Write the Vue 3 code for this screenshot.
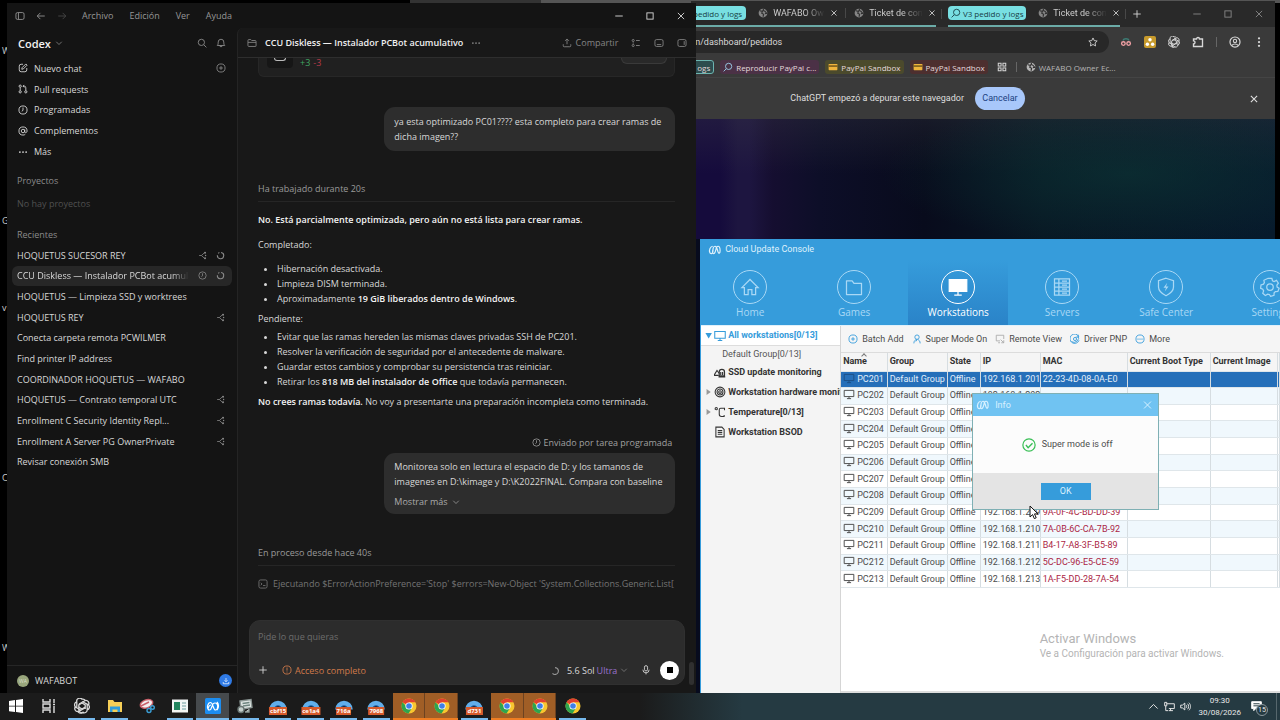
<template>
  <div class="desktop">
    <div class="top-edge"></div>
    <div class="shortcuts">
      <span v-for="(label, i) in shortcuts" :key="i">{{ label }}</span>
    </div>

    <!-- Browser window -->
    <section class="browser">
      <div class="tab-strip">
        <div class="tab-group">
          <button class="group-chip" type="button">pedido y logs</button>
          <div class="tab">
            <AppIcon name="globe" class="fav" />
            <span class="tab-title">WAFABO Ow</span>
            <button type="button" aria-label="Cerrar pestaña"><AppIcon name="close" /></button>
          </div>
          <i class="tab-divider"></i>
          <div class="tab">
            <AppIcon name="globe" class="fav" />
            <span class="tab-title">Ticket de con</span>
            <button type="button" aria-label="Cerrar pestaña"><AppIcon name="close" /></button>
          </div>
        </div>
        <i class="tab-divider"></i>
        <div class="tab-group second">
          <button class="group-chip" type="button">
            <AppIcon name="search" class="flip" />V3 pedido y logs
          </button>
          <div class="tab">
            <AppIcon name="globe" class="fav" />
            <span class="tab-title">Ticket de con</span>
            <button type="button" aria-label="Cerrar pestaña"><AppIcon name="close" /></button>
          </div>
        </div>
        <i class="tab-divider"></i>
        <button class="new-tab" type="button" aria-label="Nueva pestaña"><AppIcon name="plus" /></button>
        <div class="win-buttons dim">
          <button type="button" aria-label="Minimizar"><AppIcon name="minimize" /></button>
          <button type="button" aria-label="Maximizar"><AppIcon name="maximize" /></button>
          <button type="button" aria-label="Cerrar"><AppIcon name="closeThin" /></button>
        </div>
      </div>

      <div class="address-row">
        <div class="address">
          <input type="text" value="n/dashboard/pedidos" aria-label="Dirección" />
          <AppIcon name="star" />
        </div>
        <div class="extensions">
          <AppIcon name="incognito" class="ext-red" />
          <span class="ext-yellow"><AppIcon name="dots3" /></span>
          <AppIcon name="openai" />
          <AppIcon name="puzzle" />
          <i class="divider"></i>
          <AppIcon name="profile" />
          <AppIcon name="kebab" />
        </div>
      </div>

      <div class="bookmarks">
        <a href="#" class="mark teal">ogs</a>
        <a href="#" class="mark purple"><AppIcon name="search" class="flip" />Reproducir PayPal c...</a>
        <a href="#" class="mark olive"><AppIcon name="card" />PayPal Sandbox</a>
        <a href="#" class="mark red"><AppIcon name="card" />PayPal Sandbox</a>
        <AppIcon name="grid" class="all-marks" />
        <i class="divider"></i>
        <a href="#" class="mark plain"><AppIcon name="globe" />WAFABO Owner Ec...</a>
      </div>

      <div class="infobar">
        <span>ChatGPT empezó a depurar este navegador</span>
        <button class="cancel" type="button">Cancelar</button>
        <button class="info-close" type="button" aria-label="Cerrar aviso"><AppIcon name="close" /></button>
      </div>
      <div class="page"></div>
    </section>

    <!-- Codex window -->
    <section class="codex">
      <header class="menubar">
        <AppIcon name="panel" />
        <AppIcon name="arrowLeft" />
        <AppIcon name="arrowRight" class="faded" />
        <nav>
          <button v-for="item in menus" :key="item" type="button">{{ item }}</button>
        </nav>
        <div class="win-buttons">
          <button type="button" aria-label="Minimizar"><AppIcon name="minimize" /></button>
          <button type="button" aria-label="Maximizar"><AppIcon name="maximize" /></button>
          <button type="button" aria-label="Cerrar"><AppIcon name="closeThin" /></button>
        </div>
      </header>

      <div class="codex-body">
        <aside class="sidebar">
          <div class="brand">
            <button type="button" class="brand-name">Codex <AppIcon name="chevronDown" /></button>
            <AppIcon name="search" />
            <AppIcon name="bell" />
          </div>
          <nav class="side-nav">
            <a v-for="item in sideNav" :key="item.label" href="#">
              <AppIcon :name="item.icon" />
              <span>{{ item.label }}</span>
              <AppIcon v-if="item.action" :name="item.action" class="trail" />
            </a>
          </nav>
          <h2 class="projects-title">Proyectos</h2>
          <p class="empty">No hay proyectos</p>
          <h2 class="recents-title">Recientes</h2>
          <nav class="recents">
            <a v-for="chat in recents" :key="chat.title" href="#" :class="{ active: chat.active }">
              <span>{{ chat.title }}</span>
              <AppIcon v-for="icon in chat.icons" :key="icon" :name="icon" />
            </a>
          </nav>
          <footer class="account">
            <span class="avatar">WA</span>
            <span>WAFABOT</span>
            <button type="button" aria-label="Descargar"><AppIcon name="download" /></button>
          </footer>
        </aside>

        <main class="chat">
          <header class="chat-head">
            <AppIcon name="folderOpen" />
            <h1>CCU Diskless — Instalador PCBot acumulativo</h1>
            <AppIcon name="more" />
            <button type="button" class="share"><AppIcon name="upload" />Compartir</button>
            <AppIcon name="list" />
            <AppIcon name="bottomPanel" />
            <AppIcon name="rightPanel" />
          </header>

          <div class="thread">
            <div class="diff-card">
              <span class="diff-icon"></span>
              <span class="added">+3</span><span class="removed">-3</span>
              <span class="diff-button"></span>
            </div>
            <div class="bubble first-bubble">
              ya esta optimizado PC01???? esta completo para crear ramas de dicha imagen??
            </div>
            <p class="status worked">Ha trabajado durante 20s</p>
            <p class="verdict"><b>No. Está parcialmente optimizada, pero aún no está lista para crear ramas.</b></p>
            <p class="done-title">Completado:</p>
            <ul class="done">
              <li>Hibernación desactivada.</li>
              <li>Limpieza DISM terminada.</li>
              <li>Aproximadamente <b>19 GiB liberados dentro de Windows</b>.</li>
            </ul>
            <p class="pending-title">Pendiente:</p>
            <ul class="pending">
              <li>Evitar que las ramas hereden las mismas claves privadas SSH de PC201.</li>
              <li>Resolver la verificación de seguridad por el antecedente de malware.</li>
              <li>Guardar estos cambios y comprobar su persistencia tras reiniciar.</li>
              <li>Retirar los <b>818 MB del instalador de Office</b> que todavía permanecen.</li>
            </ul>
            <p class="advice"><b>No crees ramas todavía.</b> No voy a presentarte una preparación incompleta como terminada.</p>
            <p class="sent"><AppIcon name="clock" />Enviado por tarea programada</p>
            <div class="bubble">
              Monitorea solo en lectura el espacio de D: y los tamanos de imagenes en D:\kimage y D:\K2022FINAL. Compara con baseline
              <button type="button" class="show-more">Mostrar más <AppIcon name="chevronDown" /></button>
            </div>
            <p class="status running">En proceso desde hace 40s</p>
            <p class="command">
              <AppIcon name="terminal" />
              <span>Ejecutando $ErrorActionPreference='Stop' $errors=New-Object 'System.Collections.Generic.List[</span>
            </p>
          </div>

          <form class="composer" @submit.prevent>
            <input v-model="prompt" type="text" placeholder="Pide lo que quieras" aria-label="Mensaje" />
            <div class="composer-row">
              <button type="button" aria-label="Adjuntar"><AppIcon name="plus" /></button>
              <button type="button" class="access"><AppIcon name="alert" />Acceso completo</button>
              <AppIcon name="spinner" class="thinking" />
              <button type="button" class="model">5.6 Sol <em>Ultra</em><AppIcon name="chevronDown" /></button>
              <button type="button" aria-label="Dictar" class="mic"><AppIcon name="mic" /></button>
              <button type="button" aria-label="Detener" class="stop"></button>
            </div>
          </form>
          <span class="scroll-thumb"></span>
        </main>
      </div>
    </section>

    <!-- Cloud Update Console window -->
    <section class="console">
      <header class="console-title"><AppIcon name="cloudLogo" />Cloud Update Console</header>
      <nav class="console-nav">
        <a v-for="item in consoleNav" :key="item.label" href="#" :class="{ active: item.active }">
          <span class="ring"><AppIcon :name="item.icon" /></span>
          {{ item.label }}
        </a>
      </nav>

      <div class="console-body">
        <aside class="tree">
          <a v-for="node in tree" :key="node.label" href="#" :class="node.kind">
            <i class="caret" :class="node.caret"></i>
            <AppIcon v-if="node.icon" :name="node.icon" />
            <span>{{ node.label }}</span>
          </a>
        </aside>

        <div class="console-main">
          <div class="tools">
            <button v-for="tool in tools" :key="tool.label" type="button">
              <AppIcon :name="tool.icon" :class="{ gray: tool.gray }" />{{ tool.label }}
            </button>
          </div>
          <table>
            <colgroup>
              <col v-for="col in columns" :key="col.key" :class="'col-' + col.key" />
            </colgroup>
            <thead>
              <tr>
                <th v-for="col in columns" :key="col.key" :class="{ sorted: col.key === 'name' }">{{ col.label }}</th>
              </tr>
            </thead>
            <tbody>
              <tr v-for="pc in machines" :key="pc.name" :class="{ selected: pc.name === 'PC201' }">
                <td class="name"><AppIcon name="monitor" />{{ pc.name }}</td>
                <td>Default Group</td>
                <td>Offline</td>
                <td>{{ pc.ip }}</td>
                <td class="mac">{{ pc.mac }}</td>
                <td></td>
                <td></td>
                <td></td>
              </tr>
            </tbody>
          </table>
          <div class="hscroll"></div>
        </div>
      </div>

      <div class="dialog" role="dialog" aria-label="Info">
        <header>
          <AppIcon name="cloudLogo" /><span>Info</span>
          <button type="button" aria-label="Cerrar"><AppIcon name="closeThin" /></button>
        </header>
        <p><AppIcon name="check" />Super mode is off</p>
        <footer><button type="button">OK</button></footer>
      </div>
      <svg class="cursor" viewBox="0 0 10 15">
        <path d="M1 1v11l2.600-2.400 1.700 4 1.900-.8-1.700-3.900H9z" fill="#fff" stroke="#111" />
      </svg>
      <div class="watermark">
        <strong>Activar Windows</strong>
        <span>Ve a Configuración para activar Windows.</span>
      </div>
    </section>

    <!-- Taskbar -->
    <footer class="taskbar">
      <div class="apps">
        <button
          v-for="(app, i) in apps"
          :key="i"
          type="button"
          :aria-label="app.icon"
          :class="[app.state, { open: app.open, tagged: app.tag }]"
        >
          <AppIcon :name="app.icon" />
          <span v-if="app.tag" class="tag">{{ app.tag }}</span>
        </button>
      </div>
      <div class="tray">
        <AppIcon name="chevronUp" />
        <AppIcon name="network" />
        <AppIcon name="volume" />
        <time>09:30<br />30/08/2026</time>
        <span class="notices"><AppIcon name="notice" /><b>15</b></span>
      </div>
    </footer>
  </div>
</template>

<script setup>
import { h, ref } from "vue";

const prompt = ref("");

const icons = {
  panel: '<rect x="1.500" y="2.500" width="13" height="11" rx="2.500"/><path d="M5.500 3v10"/>',
  arrowLeft: '<path d="M14 8H2M7 3L2 8l5 5"/>',
  arrowRight: '<path d="M2 8h12M9 3l5 5-5 5"/>',
  minimize: '<path d="M2 8h12"/>',
  maximize: '<rect x="3" y="3" width="10" height="10"/>',
  close: '<path d="M3 3l10 10M13 3L3 13" stroke-width="1.800"/>',
  closeThin: '<path d="M3 3l10 10M13 3L3 13"/>',
  chevronDown: '<path d="M2.500 5.500L8 11l5.500-5.500"/>',
  chevronUp: '<path d="M2 11l6-6 6 6"/>',
  search: '<circle cx="7" cy="7" r="5"/><path d="M11 11l4 4"/>',
  bell: '<path d="M2 12c1.500-1.500 1.500-3 1.500-5.500a4.500 4.500 0 019 0c0 2.500 0 4 1.500 5.500zM6 12a2 2 0 004 0"/>',
  compose: '<path d="M8 2H5a3 3 0 00-3 3v6a3 3 0 003 3h6a3 3 0 003-3V8M6 10l.5-2.500L12.500 1.500l2 2L8.500 9.500z"/>',
  plusCircle: '<circle cx="8" cy="8" r="6.500"/><path d="M8 5v6M5 8h6"/>',
  pull: '<circle cx="3.500" cy="3.500" r="1.800"/><circle cx="3.500" cy="12.500" r="1.800"/><circle cx="12.500" cy="12.500" r="1.800"/><path d="M3.500 5.500v5M12.500 10.500V6a2.500 2.500 0 00-2.500-2.500H8M10 1.500l-2 2 2 2"/>',
  clock: '<circle cx="8" cy="8" r="6.500"/><path d="M8 4v4.500L6 10"/>',
  at: '<circle cx="8" cy="8" r="2.800"/><path d="M10.800 5.500V9c0 2.500 3.700 2.200 3.700-1A6.500 6.500 0 108 14.500c1.500 0 2.500-.4 3.500-1"/>',
  more: '<g fill="currentColor" stroke="none"><circle cx="3" cy="8" r="1.400"/><circle cx="8" cy="8" r="1.400"/><circle cx="13" cy="8" r="1.400"/></g>',
  branch: '<path d="M2 8h4l5-4.500M6 8l5 4.500"/><g fill="currentColor" stroke="none"><circle cx="12.500" cy="3" r="1.800"/><circle cx="12.500" cy="13" r="1.800"/><circle cx="13.500" cy="8" r="1.300"/></g>',
  ring: '<path d="M9 2.600A5.600 5.600 0 112.500 7.500M4 4.200A5.600 5.600 0 016 2.800" stroke-width="2"/>',
  spinner: '<path d="M8 2.500a5.500 5.500 0 11-4 9.300" stroke-width="1.800"/>',
  download: '<path d="M8 2v7M5 6.500L8 9.500l3-3M2.500 10v3.500h11V10"/>',
  upload: '<path d="M8 10V2M5 4.500L8 1.500l3 3M2 10v2.500A1.500 1.500 0 003.500 14h9a1.500 1.500 0 001.500-1.500V10"/>',
  folderOpen: '<path d="M1.500 6.500V4A1.500 1.500 0 013 2.500h3l1.500 1.500H13A1.500 1.500 0 0114.500 5.500v6A1.500 1.500 0 0113 13.500H3A1.500 1.500 0 011.500 12zM1.500 7h13"/>',
  list: '<circle cx="3.500" cy="4" r="1.700"/><circle cx="3.500" cy="12" r="1.700"/><path d="M8 4h6M8 12h6M3.500 7v2"/>',
  bottomPanel: '<rect x="1.500" y="2.500" width="13" height="11" rx="2.500"/><path d="M4.500 10.500h7"/>',
  rightPanel: '<rect x="1.500" y="2.500" width="13" height="11" rx="2.500"/><path d="M11.500 5v6"/>',
  terminal: '<rect x="1.500" y="1.500" width="13" height="13" rx="2.500"/><path d="M4.500 6l2 2-2 2M8 10.500h4"/>',
  plus: '<path d="M8 2v12M2 8h12"/>',
  alert: '<circle cx="8" cy="8" r="6.500"/><path d="M8 4v5M8 10.500v1.500"/>',
  mic: '<rect x="5.500" y="1" width="5" height="8.500" rx="2.500"/><path d="M3 7.500a5 5 0 0010 0M8 12.500V15"/>',
  globe: '<circle cx="8" cy="8" r="7" fill="currentColor" stroke="none"/><path d="M3 4.500l4 1-1 3 3 1.500-1 4M9 1.500L8 4l3 1 3 3.500-3 .5" stroke="#303030" stroke-width="1.800"/>',
  star: '<path d="M8 1.500l2 4.300 4.700.6-3.400 3.200.8 4.700L8 12l-4.100 2.300.8-4.700L1.300 6.400l4.700-.6z"/>',
  incognito: '<path d="M4 6c1-3 7-3 8 0" stroke="#3d7d75" stroke-width="2"/><circle cx="4.500" cy="10" r="2.400" stroke-width="1.800"/><circle cx="11.500" cy="10" r="2.400" stroke-width="1.800"/>',
  dots3: '<g fill="#fff" stroke="none"><circle cx="8" cy="5" r="2.300"/><circle cx="4.500" cy="11" r="2.300"/><circle cx="11.500" cy="11" r="2.300"/></g>',
  openai: '<g stroke-width="1.300"><path d="M8 5L4.800 6.900v5.200a3 3 0 005 1.800"/><path d="M8 5l3.200 1.900v4.200M4.800 9.100l3.200 2 3.200-2"/><path d="M8 1.200a3 3 0 013.300 1.300 3 3 0 013.200 4.400 3 3 0 01-1.300 5 3 3 0 01-4.600 2.500 3 3 0 01-4.700-.9 3 3 0 01-2.600-4.700 3 3 0 011.500-4.900A3 3 0 018 1.200zM11.300 2.500L5 6M14.500 6.900L8 3.500M13.200 12V6.500M2.800 3.900v5.800M1.300 9L7.500 12.500M4.500 13.500L11 10"/></g>',
  puzzle: '<path d="M2 4h4a2 2 0 014 0h4v10H2v-3.500a2 2 0 000-4z" stroke-width="1.800"/>',
  profile: '<circle cx="8" cy="8" r="6.700" stroke-width="1.600"/><circle cx="8" cy="6.500" r="2.200"/><path d="M4 12.500c1.500-2.500 6.500-2.500 8 0"/>',
  kebab: '<g fill="currentColor" stroke="none"><circle cx="8" cy="3" r="1.500"/><circle cx="8" cy="8" r="1.500"/><circle cx="8" cy="13" r="1.500"/></g>',
  card: '<rect x="1" y="3" width="14" height="10" rx="1" fill="#f0b43c" stroke="none"/><path d="M1 6.500h14" stroke="#5a4312" stroke-width="2"/>',
  grid: '<g stroke-width="1.600"><rect x="2" y="2" width="4.500" height="4.500"/><rect x="9.500" y="2" width="4.500" height="4.500"/><rect x="2" y="9.500" width="4.500" height="4.500"/><rect x="9.500" y="9.500" width="4.500" height="4.500"/></g>',
  cloudLogo: '<g stroke-width="1.600"><path d="M5 3C2 3-.5 8 1.200 11.500c1.300 2.500 4 1 4-2C5.200 6 6 3 8 3c2.500 0 3 4.500 4 7.500s2.800 2 2.800-1.500S13.500 3 12 3s-2.500 2.500-3 5-1.500 5-3 5-1.500-4-.5-6"/></g>',
  home: '<path d="M1.500 8.500L8 2l6.500 6.500h-2V14h-3v-4h-3v4h-3V8.500z"/>',
  folder: '<path d="M2 3h4.500L8 5h6v9H2z" stroke-linejoin="round"/>',
  screen: '<path d="M1 2h14v9.500H1z" fill="currentColor"/><path d="M8 12v2.500M5 14.500h6"/>',
  servers: '<path d="M2 1.500h12v13H2zM2 4.800h12M2 8h12M2 11.200h12M5.500 1.500v13M8 3.200h4M8 6.400h4M8 9.600h4M8 12.800h4"/>',
  shield: '<path d="M8 1l6 2v5c0 3.500-3 5.500-6 7-3-1.500-6-3.500-6-7V3z"/><path d="M9 4.500L6 8.500h2l-1 3 3-4H8z" fill="currentColor" stroke="none"/>',
  gear: '<circle cx="8" cy="8" r="2.600"/><path d="M6.500 1h3l.5 2 1.300.6L13.200 2.700l1.500 2.200-1.200 1.700.2 1.400 1.600 1-1 2.600-2 .1-1 1-.1 2-2.700.8L7.500 14l-1.400-.2-1.800 1-2.100-1.800.7-1.900-.7-1.300L.5 9 .8 6.300l2-.6.7-1.200-.4-1.900z"/>',
  monitor: '<path d="M1 2h14v9H1zM8 11v3M5 14h6"/>',
  alarm: '<path d="M0 12.500L4 6l3 4" /><path d="M0 12.500h6M7 13V8a3.500 3.500 0 017 0v5zM6 14.500h9M9 12V8M11.500 12V8" stroke-width="1.600"/>',
  disc: '<circle cx="8" cy="8" r="6.500"/><circle cx="8" cy="8" r="4"/><circle cx="8" cy="8" r="1.800"/>',
  celsius: '<circle cx="3" cy="3.500" r="1.500"/><path d="M14 5.500V3H9a2 2 0 00-2 2v6a3 3 0 003 3h3.500v-2"/>',
  page: '<path d="M2.500 1.500h8l3 3v10h-11zM5 6h6M5 8.500h6M5 11h6"/>',
  person: '<circle cx="8" cy="5" r="3.500"/><path d="M3 15c0-4 2-6 5-6l-2 3M9 9c2.500.5 4 2.500 4 6"/>',
  remote: '<path d="M8 11H2V2h12v6M9 9l5 5M14 10v4h-4M5 14h3"/>',
  pnp: '<path d="M14 4a7.500 7.500 0 10.500 6M2 12a7.500 7.500 0 0011-9.500" /><circle cx="8" cy="8" r="2.500"/><path d="M13 1v4H9"/>',
  moreCircle: '<circle cx="8" cy="8" r="6.500"/><path d="M4 8h1.600M7.200 8h1.600M10.400 8H12" stroke-width="2"/>',
  check: '<circle cx="8" cy="8" r="7"/><path d="M4.500 8l2.500 3 5-5" stroke-width="1.600"/>',
  network: '<path d="M4 4h11v7H7M9.500 11v3M7 14h6M1 2h3v5H1zM2.500 7v7H6"/>',
  volume: '<path d="M1 6h2.500L7 3v10l-3.500-3H1zM9 6c1 1 1 3 0 4M11 4c2 2 2 6 0 8M13 2.500c3 3 3 8 0 11"/>',
  notice: '<path d="M1 1h14v10H7l-3 3v-3H1z" fill="#fff" stroke="#fff"/><path d="M3.500 4h9M3.500 7h9" stroke="#253a42"/>',
  windows: '<path d="M1 3l6-1v5.700H1zM8 1.900L15 1v6.700H8zM1 8.500h6v5.600l-6-.9zM8 8.500h7V15l-7-.9z" fill="#fff" stroke="none"/>',
  taskview: '<path d="M2 1v3h7V1M2 15v-3h7v3M2 6h7v4H2zM13 1v4M13 8v7M12 6.500h2" stroke="#ddd"/>',
  explorer: '<path d="M1 2h5l1.500 2H15v10H1z" fill="#f6cf57" stroke="none"/><path d="M3 14V8.500h10V14h-2.500v-2.500h-5V14z" fill="#2f9ddc" stroke="none"/>',
  snip: '<ellipse cx="7.500" cy="6" rx="6.500" ry="4" fill="#f3eef0" stroke="#c9606a" transform="rotate(-20 7 6)"/><path d="M2 8l8-4" stroke="#c9606a"/><circle cx="10" cy="12.500" r="2" stroke="#3a9ed5"/><circle cx="13.500" cy="9.500" r="1.800" stroke="#3a9ed5"/>',
  sheet: '<path d="M0 1.500h16v13H0z" fill="#f2f5f4" stroke="none"/><path d="M2 4h6v8H2z" fill="#23865f" stroke="none"/><path d="M10 5h4M10 8h4M10 11h4" stroke="#9bb"/>',
  cloudApp: '<rect width="16" height="16" rx="1.500" fill="#1c8df0" stroke="none"/><path d="M4 12c-3-2-1-7.500 1.500-7.500S8 12 10.500 12s3.500-7-.5-7-2.500 7-5.500 7S4 7 6 7M12 4c2 2 2 6 0 8" stroke="#fff" stroke-width="1.200"/>',
  tools: '<path d="M3 3l11-1.500 1 8-11 2z" fill="#dfe6e4" stroke="#8b9694"/><path d="M5.500 5.500l7-1M6 8l7-1" stroke="#6f8580"/><circle cx="4" cy="11.500" r="3" fill="#c5cfcc" stroke="#6a7674"/><path d="M8 14h4v-3" fill="#dfe6e4" stroke="#8b9694"/>',
  arc: '<path d="M2.500 11a5.500 5.500 0 0111 0" stroke="#61aeea" stroke-width="4.500"/><path d="M4.800 11a3.200 3.200 0 016.400 0" stroke="#2467b0" stroke-width="1"/>',
  chrome: '<circle cx="8" cy="8" r="7.500" fill="#f8c62f" stroke="none"/><path d="M8 8L1.500 4.200A7.500 7.500 0 0114.500 4.200H8z" fill="#e2412f" stroke="none"/><path d="M1.500 4.200A7.500 7.500 0 007.500 15.500L11 10 8 8H5z" fill="#2ea44f" stroke="none"/><circle cx="8" cy="8" r="3.600" fill="#fff" stroke="none"/><circle cx="8" cy="8" r="2.800" fill="#3f7fe8" stroke="none"/>',
};

const AppIcon = ({ name }) =>
  h("svg", {
    class: "icon",
    viewBox: "0 0 16 16",
    "aria-hidden": "true",
    innerHTML: icons[name],
  });
AppIcon.props = ["name"];

const shortcuts = ["W", "G", "v", "C", "W"];
const menus = ["Archivo", "Edición", "Ver", "Ayuda"];

const sideNav = [
  { icon: "compose", label: "Nuevo chat", action: "plusCircle" },
  { icon: "pull", label: "Pull requests" },
  { icon: "clock", label: "Programadas" },
  { icon: "at", label: "Complementos" },
  { icon: "more", label: "Más" },
];

const recents = [
  { title: "HOQUETUS SUCESOR REY", icons: ["branch", "ring"] },
  { title: "CCU Diskless — Instalador PCBot acumulativo", icons: ["clock", "ring"], active: true },
  { title: "HOQUETUS — Limpieza SSD y worktrees" },
  { title: "HOQUETUS REY", icons: ["branch"] },
  { title: "Conecta carpeta remota PCWILMER" },
  { title: "Find printer IP address" },
  { title: "COORDINADOR HOQUETUS — WAFABO" },
  { title: "HOQUETUS — Contrato temporal UTC", icons: ["branch"] },
  { title: "Enrollment C Security Identity Repl...", icons: ["branch"] },
  { title: "Enrollment A Server PG OwnerPrivate", icons: ["branch"] },
  { title: "Revisar conexión SMB" },
];

const consoleNav = [
  { icon: "home", label: "Home" },
  { icon: "folder", label: "Games" },
  { icon: "screen", label: "Workstations", active: true },
  { icon: "servers", label: "Servers" },
  { icon: "shield", label: "Safe Center" },
  { icon: "gear", label: "Settings" },
];

const tree = [
  { icon: "monitor", label: "All workstations[0/13]", kind: "root", caret: "down" },
  { label: "Default Group[0/13]", kind: "child" },
  { icon: "alarm", label: "SSD update monitoring" },
  { icon: "disc", label: "Workstation hardware monitoring", caret: "right" },
  { icon: "celsius", label: "Temperature[0/13]", caret: "right" },
  { icon: "page", label: "Workstation BSOD" },
];

const tools = [
  { icon: "plusCircle", label: "Batch Add" },
  { icon: "person", label: "Super Mode On" },
  { icon: "remote", label: "Remote View", gray: true },
  { icon: "pnp", label: "Driver PNP" },
  { icon: "moreCircle", label: "More" },
];

const columns = [
  { key: "name", label: "Name" },
  { key: "group", label: "Group" },
  { key: "state", label: "State" },
  { key: "ip", label: "IP" },
  { key: "mac", label: "MAC" },
  { key: "boot", label: "Current Boot Type" },
  { key: "image", label: "Current Image" },
  { key: "rest", label: "" },
];

const macs = {
  1: "22-23-4D-08-0A-E0",
  9: "9A-0F-4C-BD-DD-39",
  10: "7A-0B-6C-CA-7B-92",
  11: "B4-17-A8-3F-B5-89",
  12: "5C-DC-96-E5-CE-59",
  13: "1A-F5-DD-28-7A-54",
};

const machines = Array.from({ length: 13 }, (_, i) => ({
  name: `PC${201 + i}`,
  ip: `192.168.1.${201 + i}`,
  mac: macs[i + 1] || "",
}));

const apps = [
  { icon: "windows" },
  { icon: "taskview" },
  { icon: "openai", open: true },
  { icon: "explorer", open: true },
  { icon: "snip" },
  { icon: "sheet", open: true },
  { icon: "cloudApp", open: true, state: "current" },
  { icon: "tools", open: true },
  { icon: "arc", tag: "cbf15", open: true },
  { icon: "arc", tag: "ce1a4", open: true },
  { icon: "arc", tag: "716a", open: true },
  { icon: "arc", tag: "7968", open: true },
  { icon: "chrome", state: "alerting" },
  { icon: "chrome", state: "alerting" },
  { icon: "arc", tag: "d731", open: true },
  { icon: "chrome", state: "alerting" },
  { icon: "chrome", state: "alerting" },
  { icon: "chrome", open: true },
];
</script>

<style>
body {
  margin: 0;
  background: #000;
}
</style>

<style scoped>
.desktop {
  position: relative;
  height: 100vh;
  overflow: hidden;
  background: #000;
  font: 9px/15px "Open Sans", "Noto Sans", sans-serif;
  color: #d8d8d8;
}

.desktop *,
.desktop *::before {
  box-sizing: border-box;
}

button,
input {
  margin: 0;
  padding: 0;
  border: 0;
  background: none;
  color: inherit;
  font: inherit;
}

button {
  display: flex;
  align-items: center;
  white-space: nowrap;
}

a {
  color: inherit;
  text-decoration: none;
  white-space: nowrap;
}

h1,
h2,
p,
ul {
  margin: 0;
  padding: 0;
  font-size: inherit;
}

.icon {
  flex: none;
  width: 10px;
  height: 10px;
  fill: none;
  stroke: currentColor;
  stroke-width: 1.4;
}

.top-edge {
  position: absolute;
  inset: 0 0 auto 32%;
  height: 3px;
  background: linear-gradient(90deg, #333 0 15%, #555 15%);
}

.shortcuts {
  position: absolute;
  top: 43px;
  left: 0;
  display: grid;
  width: 12px;
  padding-left: 2px;
  grid-template-rows: 170px 87px 170px 170px 15px;
  color: #ccc;
}

/* Browser */
.browser {
  position: absolute;
  top: 1px;
  right: 5px;
  left: 54%;
  display: flex;
  flex-direction: column;
  height: 300px;
  background: #3a3a3a;
  font-family: Roboto, "Open Sans", sans-serif;
}

.tab-strip {
  display: flex;
  flex: none;
  align-items: center;
  height: 26px;
  background: #292929;
}

.tab-group {
  display: flex;
  align-items: center;
  align-self: stretch;
  border-bottom: 2px solid #6caca8;
}

.group-chip {
  justify-content: flex-end;
  width: 55px;
  height: 14px;
  margin-right: 4px;
  padding: 0 4px;
  border-radius: 4px;
  background: #78dfe2;
  color: #173d42;
  font-family: "Open Sans", sans-serif;
  font-size: 8px;
}

.second .group-chip {
  justify-content: center;
  width: 78px;
  gap: 2px;
}

.flip {
  transform: scaleX(-1);
}

.tab {
  display: flex;
  align-items: center;
  width: 90px;
  gap: 5px;
  padding: 0 2px 0 8px;
  color: #ccc;
}

.tab .fav {
  color: #858585;
}

.tab-title {
  flex: 1;
  white-space: nowrap;
  -webkit-mask-image: linear-gradient(90deg, #000 60%, transparent);
  mask-image: linear-gradient(90deg, #000 60%, transparent);
}

.tab button .icon {
  width: 8px;
  height: 8px;
}

.tab-divider {
  width: 1px;
  height: 10px;
  margin: 0 0 0 5px;
  background: #484848;
}

.tab-strip > .tab-divider {
  margin-right: 6px;
}

.win-buttons {
  display: flex;
  gap: 21px;
  margin-left: auto;
}

.win-buttons.dim {
  margin-right: 11px;
  color: #8a8a8a;
}

.address-row {
  display: flex;
  flex: none;
  align-items: center;
  height: 30px;
}

.address {
  display: flex;
  flex: 1;
  align-items: center;
  height: 22px;
  padding: 0 11px 0 4px;
  border-radius: 0 11px 11px 0;
  background: #282828;
}

.address input {
  flex: 1;
  min-width: 0;
}

.extensions {
  display: flex;
  align-items: center;
  gap: 12px;
  padding: 0 10px 0 11px;
}

.extensions .icon {
  width: 12px;
  height: 12px;
}

.ext-red {
  color: #f0a0a4;
}

.ext-yellow {
  display: flex;
  border-radius: 2px;
  background: #c79a2c;
}

.divider {
  width: 1px;
  height: 10px;
  background: #666;
}

.bookmarks {
  display: flex;
  flex: none;
  align-items: center;
  height: 20px;
  gap: 6px;
  font-family: "Open Sans", sans-serif;
  font-size: 8px;
}

.mark {
  display: flex;
  align-items: center;
  height: 14px;
  gap: 3px;
  padding: 0 3px;
  border-radius: 3px;
  color: #e4d9dc;
}

.mark.teal {
  justify-content: flex-end;
  width: 23px;
  border: 1px solid #6cb5b0;
  background: #2d4d4e;
}

.mark.purple {
  background: #4b3146;
}

.mark.purple .icon {
  color: #9fd3f0;
}

.mark.olive {
  background: #4b4a2c;
}

.mark.red {
  background: #4d2f2f;
}

.mark.plain {
  color: #b5b5b5;
}

.all-marks {
  margin: 0 3px;
}

.infobar {
  display: flex;
  flex: none;
  align-items: center;
  justify-content: flex-end;
  height: 42px;
  gap: 11px;
  padding-right: 16px;
  border-top: 1px solid #444;
  color: #dedede;
}

.cancel {
  justify-content: center;
  width: 50px;
  height: 23px;
  border-radius: 12px;
  background: #a8c7fa;
  color: #1b3f80;
}

.info-close {
  margin-left: 213px;
}

.page {
  flex: 1;
  background:
    radial-gradient(ellipse at 75% 30%, rgba(12, 50, 52, 0.7), transparent 40%),
    linear-gradient(180deg, rgba(70, 70, 75, 0.25), transparent 30%),
    linear-gradient(90deg, #150b3c 0 5%, #1d1540 8% 10%, #150e30 14%, #0d0e28 22%, #080b1c 40%, #081824 60%, #071a2c);
}

/* Codex */
.codex {
  position: absolute;
  top: 3px;
  right: 45.6%;
  bottom: 27px;
  left: 7px;
  display: flex;
  flex-direction: column;
  background: #141414;
}

.menubar {
  display: flex;
  flex: none;
  align-items: center;
  height: 25px;
  gap: 11px;
  padding: 0 10px 0 8px;
  color: #969696;
}

.faded {
  opacity: 0.4;
}

.menubar nav {
  display: flex;
  gap: 16px;
  padding-left: 4px;
}

.menubar .win-buttons {
  color: #e0e0e0;
}

.codex-body {
  display: grid;
  flex: 1;
  grid-template-columns: 230px 1fr;
  min-height: 0;
}

.sidebar {
  display: flex;
  flex-direction: column;
  min-width: 0;
}

.brand {
  display: flex;
  align-items: center;
  height: 30px;
  gap: 9px;
  padding: 0 11px;
  color: #8d8d8d;
}

.brand-name {
  gap: 4px;
  margin-right: auto;
  color: #f2f2f2;
  font-size: 11px;
  font-weight: 600;
}

.brand-name .icon {
  width: 8px;
  height: 8px;
  color: #999;
}

.side-nav {
  display: grid;
  height: 104px;
  grid-auto-rows: 1fr;
}

.side-nav a,
.recents a {
  display: flex;
  align-items: center;
  gap: 6px;
  padding: 0 11px;
}

.side-nav .trail {
  margin-left: auto;
  color: #888;
}

.sidebar h2 {
  padding-left: 10px;
  color: #8b8b8b;
  font-weight: 400;
}

.projects-title {
  margin-top: 11px;
}

.empty {
  margin-top: 8px;
  padding-left: 10px;
  color: #505050;
}

.recents-title {
  margin-top: 16px;
}

.recents {
  display: grid;
  height: 227px;
  grid-template-columns: minmax(0, 1fr);
  grid-auto-rows: 1fr;
  margin: 3px 5px 0;
}

.recents a {
  gap: 9px;
  padding: 0 7px 0 5px;
  border-radius: 6px;
}

.recents a.active {
  background: #272727;
}

.recents span {
  flex: 1;
  overflow: hidden;
}

.recents .active span {
  -webkit-mask-image: linear-gradient(90deg, #000 90%, transparent);
  mask-image: linear-gradient(90deg, #000 90%, transparent);
}

.recents .icon {
  width: 9px;
  height: 9px;
  color: #8a8a8a;
}

.account {
  display: flex;
  align-items: center;
  height: 28px;
  gap: 6px;
  margin-top: auto;
  padding: 2px 5px 0 10px;
  border-top: 1px solid #262626;
}

.avatar {
  width: 12px;
  height: 12px;
  border-radius: 50%;
  background: #99a67c;
  color: #d9dfca;
  font-size: 5px;
  line-height: 12px;
  text-align: center;
}

.account button {
  justify-content: center;
  width: 13px;
  height: 13px;
  margin-left: auto;
  border-radius: 50%;
  background: #2f7ae5;
  color: #fff;
}

.account button .icon {
  width: 8px;
  height: 8px;
}

.chat {
  position: relative;
  display: flex;
  flex-direction: column;
  min-width: 0;
  border-left: 1px solid #242424;
  border-radius: 6px 0 0 0;
  background: #181818;
}

.chat-head {
  display: flex;
  flex: none;
  align-items: center;
  height: 30px;
  gap: 8px;
  padding: 0 9px;
  border-bottom: 1px solid #2e2e2e;
  color: #858585;
}

.chat-head h1 {
  color: #f0f0f0;
  font-weight: 600;
  white-space: nowrap;
}

.share {
  gap: 4px;
  margin-right: 5px;
  margin-left: auto;
}

.chat-head > .icon:nth-last-child(-n + 2) {
  margin-left: 5px;
}

.thread {
  flex: 1;
  min-height: 0;
  overflow: hidden;
  padding: 0 21px 0 20px;
}

.diff-card {
  display: flex;
  height: 19px;
  gap: 3px;
  padding-left: 8px;
  border: 1px solid #272727;
  border-top: 0;
  border-radius: 0 0 6px 6px;
  background: #202020;
  line-height: 9px;
}

.diff-icon {
  width: 26px;
  height: 10px;
  margin-right: 4px;
  border-radius: 0 0 4px 4px;
  background: #161616;
}

.diff-icon::before {
  content: "";
  display: block;
  width: 12px;
  height: 3px;
  margin: 0 auto;
  border: 1px solid #bbb;
  border-top: 0;
  border-radius: 0 0 3px 3px;
}

.added {
  color: #41a562;
}

.removed {
  color: #b63a49;
}

.diff-button {
  width: 46px;
  height: 6px;
  margin: 0 7px 0 auto;
  border: 1px solid #3a3a3a;
  border-top: 0;
  border-radius: 0 0 6px 6px;
  background: #292929;
}

.bubble {
  width: 291px;
  margin: 3px 0 0 auto;
  padding: 6px 10px 5px;
  border-radius: 11px;
  background: #2d2d2d;
}

.first-bubble {
  margin-top: 30px;
  padding: 7px 10px;
}

.status {
  padding-bottom: 5px;
  border-bottom: 1px solid #262626;
  color: #9a9a9a;
}

.worked {
  margin-top: 30px;
}

.verdict {
  margin-top: 10px;
}

.thread b {
  color: #f3f3f3;
  font-weight: 600;
}

.done-title {
  margin-top: 10px;
}

.thread ul {
  padding-left: 19px;
}

.done {
  margin-top: 9px;
}

.pending-title {
  margin-top: 5px;
}

.pending {
  margin-top: 3px;
}

.advice {
  margin-top: 5px;
}

.sent {
  display: flex;
  align-items: center;
  justify-content: flex-end;
  gap: 3px;
  margin-top: 26px;
  padding-right: 3px;
  color: #a0a0a0;
}

.sent .icon {
  width: 9px;
  height: 9px;
}

.show-more {
  gap: 4px;
  margin-top: 5px;
  color: #aaa;
}

.show-more .icon {
  width: 8px;
  height: 8px;
}

.running {
  margin-top: 31px;
}

.command {
  display: flex;
  align-items: center;
  gap: 5px;
  margin-top: 10px;
  color: #747474;
  white-space: nowrap;
}

.composer {
  flex: none;
  height: 65px;
  margin: 0 11px 8px;
  padding: 8px 5px 0 8px;
  border: 1px solid #303030;
  border-radius: 11px;
  background: #2c2c2c;
}

.composer input {
  width: 100%;
  outline: 0;
}

.composer input::placeholder {
  color: #6c6c6c;
  opacity: 1;
}

.composer-row {
  display: flex;
  align-items: center;
  height: 20px;
  margin-top: 16px;
}

.access {
  gap: 3px;
  margin-left: 14px;
  color: #d07a4a;
}

.thinking {
  margin: 2px 7px 0 auto;
  color: #999;
}

.model em {
  margin: 0 3px 0 2px;
  color: #9b72cf;
  font-style: normal;
}

.model .icon {
  width: 8px;
  height: 8px;
  color: #888;
}

.mic {
  margin: 0 9px 0 13px;
}

.stop {
  justify-content: center;
  width: 19px;
  height: 19px;
  border-radius: 50%;
  background: #fff;
}

.stop::before {
  content: "";
  width: 6px;
  height: 6px;
  background: #000;
}

.scroll-thumb {
  position: absolute;
  right: 2px;
  bottom: 8px;
  width: 5px;
  height: 23px;
  border-radius: 3px;
  background: #303030;
}

/* Console */
.console {
  position: absolute;
  top: 239px;
  right: 0;
  bottom: 27px;
  left: 54.7%;
  display: flex;
  flex-direction: column;
  background: #369cdb;
  box-shadow: -4px 0 #070b1e;
  color: #4c4c4c;
  font-family: Roboto, "Open Sans", sans-serif;
  overflow: hidden;
}

.console-title {
  display: flex;
  flex: none;
  align-items: center;
  height: 21px;
  gap: 3px;
  padding-left: 8px;
  color: #dff1fc;
}

.console-title .icon {
  width: 14px;
  height: 12px;
}

.console-nav {
  display: flex;
  flex: none;
  height: 65px;
  gap: 4px;
}

.console-nav a {
  display: flex;
  flex: none;
  flex-direction: column;
  align-items: center;
  width: 100px;
  gap: 1px;
  padding-top: 10px;
  color: #a9d8f5;
  font-family: "Open Sans", sans-serif;
  font-size: 10px;
}

.console-nav .active {
  background: linear-gradient(#369cdb, #2a83c8);
  color: #fff;
}

.ring {
  display: grid;
  flex: none;
  place-items: center;
  width: 34px;
  height: 34px;
  border: 1px solid;
  border-radius: 50%;
}

.ring .icon {
  width: 20px;
  height: 20px;
  stroke-width: 1;
}

.console-body {
  display: grid;
  flex: 1;
  grid-template-columns: 140px 1fr;
  min-height: 0;
  margin-left: 1px;
  border-top: 1px solid #e0f0fa;
}

.tree {
  overflow: hidden;
  border-right: 1px solid #d5d5d5;
  background: #f4f4f4;
}

.tree a {
  display: flex;
  align-items: center;
  height: 20px;
  gap: 2px;
  padding-left: 4px;
  color: #333;
  font-weight: 700;
}

.tree .root {
  border-bottom: 1px solid #ddd;
  background: #fff;
  color: #369cdb;
}

.tree .child {
  height: 16px;
  padding-left: 12px;
  color: #555;
  font-weight: 400;
}

.tree .icon {
  width: 12px;
  height: 12px;
}

.caret {
  flex: none;
  width: 7px;
  height: 6px;
}

.caret.down {
  background: #369cdb;
  clip-path: polygon(0 0, 100% 0, 50% 100%);
}

.caret.right {
  background: #999;
  clip-path: polygon(20% 0, 80% 50%, 20% 100%);
}

.console-main {
  display: flex;
  flex-direction: column;
  min-width: 0;
  overflow: hidden;
  background: #fff;
}

.tools {
  display: flex;
  flex: none;
  align-items: center;
  height: 27px;
  gap: 8px;
  padding-left: 7px;
  border-bottom: 1px solid #dcdcdc;
  background: #f5f5f5;
}

.tools button {
  gap: 4px;
}

.tools .icon {
  color: #369cdb;
}

.tools .icon.gray {
  color: #aaa;
}

table {
  flex: none;
  width: 100%;
  height: 235px;
  border-collapse: collapse;
  table-layout: fixed;
  border-bottom: 1px solid #dcdcdc;
}

.col-name {
  width: 46px;
}

.col-group,
.col-ip {
  width: 60px;
}

.col-state {
  width: 33px;
}

.col-mac {
  width: 87px;
}

.col-boot {
  width: 83px;
}

.col-image {
  width: 67px;
}

th,
td {
  padding: 0 0 0 2px;
  border-right: 1px solid #d6dde1;
  border-bottom: 1px solid #dfe6ea;
  text-align: left;
  white-space: nowrap;
}

th {
  height: 18px;
  background: #f5f5f5;
  color: #333;
  font-weight: 700;
}

.sorted {
  position: relative;
}

.sorted::before {
  content: "";
  position: absolute;
  top: 1px;
  left: 21px;
  width: 4px;
  height: 4px;
  border: 1px solid #777;
  border-width: 1px 0 0 1px;
  transform: rotate(45deg);
}

td {
  height: 16px;
}

tbody tr:nth-child(even) {
  background: #f0f8fd;
}

.name .icon {
  width: 12px;
  height: 11px;
  margin-right: 2px;
  vertical-align: -2px;
}

.mac {
  color: #ab1f45;
}

.selected {
  background: #256fb9;
}

.selected td {
  color: #e2eefa;
}

.selected .icon {
  color: #1c4f85;
}

.hscroll {
  height: 2px;
  margin-top: auto;
  background: #ddd;
}

.dialog {
  position: absolute;
  top: 154px;
  left: 272px;
  width: 187px;
  border: 1px solid #7fb0b4;
  background: #fcfcfc;
}

.dialog header {
  display: flex;
  align-items: center;
  height: 22px;
  gap: 5px;
  padding: 0 5px 0 3px;
  background: #70c3f2;
  color: #d9f1ff;
}

.dialog header .icon {
  width: 14px;
  height: 12px;
}

.dialog header button {
  margin-left: auto;
}

.dialog header button .icon {
  width: 11px;
}

.dialog p {
  display: flex;
  align-items: center;
  justify-content: center;
  height: 57px;
  gap: 6px;
  padding-left: 3px;
}

.dialog p .icon {
  width: 14px;
  height: 14px;
  color: #39bf56;
}

.dialog footer {
  display: grid;
  place-items: center;
  height: 36px;
  background: #e4e4e4;
}

.dialog footer button {
  justify-content: center;
  width: 50px;
  height: 17px;
  background: #369cdb;
  color: #d9f1ff;
}

.cursor {
  position: absolute;
  top: 266px;
  left: 329px;
  width: 10px;
  height: 15px;
}

.watermark {
  position: absolute;
  right: 56px;
  bottom: 32px;
  display: grid;
  color: #b4b4b4;
}

.watermark strong {
  font-size: 13px;
  font-weight: 400;
}

.watermark span {
  font-size: 10px;
}

/* Taskbar */
.taskbar {
  position: absolute;
  inset: auto 0 0;
  display: flex;
  justify-content: space-between;
  height: 27px;
  background: linear-gradient(90deg, #1b1b1b 50%, #253a42 58%);
}

.apps {
  display: flex;
  width: 46%;
}

.apps button {
  position: relative;
  flex: 1;
  min-width: 0;
  justify-content: center;
  border-bottom: 2px solid transparent;
}

.apps .icon {
  width: 16px;
  height: 16px;
}

.apps .tagged .icon {
  width: 18px;
  height: 18px;
}

.apps .open::after {
  content: "";
  position: absolute;
  inset: auto 3px -2px;
  height: 2px;
  background: #76b9ed;
}

.apps .current {
  background: #464a4d;
}

.apps .current::after {
  inset: auto 0 -2px;
}

.apps .alerting {
  border-bottom-color: #ee7d22;
  background: #a05e26;
  box-shadow: inset -1px 0 #6c4220;
}

.tag {
  position: absolute;
  bottom: 3px;
  left: 50%;
  padding: 0 1px;
  background: #d75a2b;
  color: #fff;
  font-size: 6px;
  font-weight: 700;
  line-height: 8px;
  transform: translateX(-50%);
}

.tray {
  display: flex;
  align-items: center;
  gap: 5px;
  margin-right: 3px;
  padding-right: 8px;
  border-right: 1px solid #56676d;
  color: #e8e8e8;
  font-family: Roboto, "Open Sans", sans-serif;
}

.tray .icon {
  width: 11px;
  height: 11px;
}

.tray time {
  margin-left: 2px;
  font-size: 8px;
  line-height: 12px;
  text-align: center;
}

.notices {
  display: flex;
  align-items: center;
  margin-left: 5px;
}

.notices b {
  width: 12px;
  height: 12px;
  margin: 6px 0 0 -6px;
  border: 1px solid #8a979c;
  border-radius: 50%;
  background: #253a42;
  font-size: 7px;
  font-weight: 400;
  line-height: 10px;
  text-align: center;
}
</style>
